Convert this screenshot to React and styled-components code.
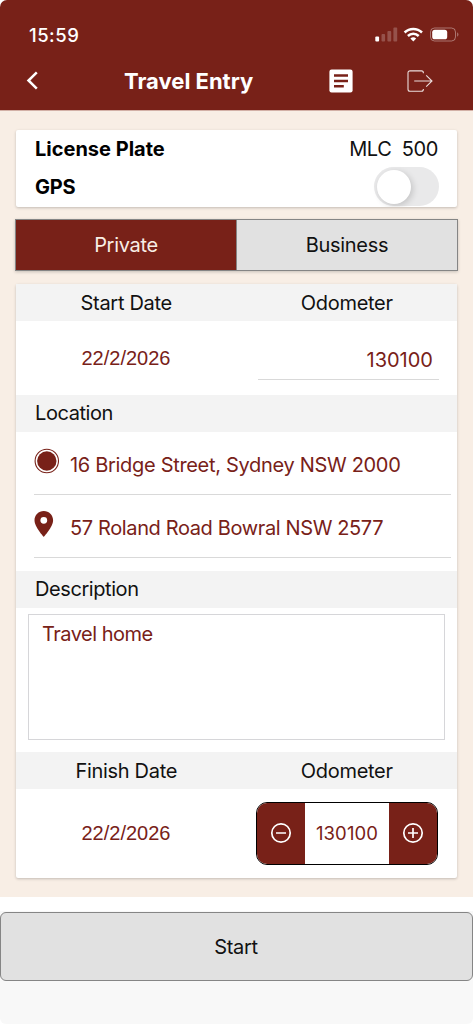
import * as React from "react"
import styled, { createGlobalStyle } from "styled-components"

const App = () => {
  return (
    <Screen>
      <GlobalStyle />
      <Header>
        <StatusBar>
          <Clock>15:59</Clock>
          <StatusIcons />
        </StatusBar>
        <NavBar>
          <BackIcon />
          <Title>Travel Entry</Title>
          <NotesIcon />
          <LogoutIcon />
        </NavBar>
      </Header>

      <Content>
        <PlateCard>
          <PlateRow>
            <Strong>License Plate</Strong>
            <Plate>MLC&nbsp; 500</Plate>
          </PlateRow>
          <PlateRow>
            <Strong $track="-0.2px">GPS</Strong>
            <Switch>
              <Knob />
            </Switch>
          </PlateRow>
        </PlateCard>

        <Segments>
          <Segment $active>Private</Segment>
          <Segment>Business</Segment>
        </Segments>

        <Panel>
          <SectionRow>
            <Cell>Start Date</Cell>
            <Cell>Odometer</Cell>
          </SectionRow>
          <StartRow>
            <DateValue>22/2/2026</DateValue>
            <OdometerField>130100</OdometerField>
          </StartRow>

          <SectionTitle>Location</SectionTitle>
          <Places>
            <Place>
              <OriginIcon />
              <Address>16 Bridge Street, Sydney NSW 2000</Address>
            </Place>
            <Place>
              <PinIcon />
              <Address $track="-0.37px">57 Roland Road Bowral NSW 2577</Address>
            </Place>
          </Places>

          <SectionTitle>Description</SectionTitle>
          <Note>Travel home</Note>

          <SectionRow>
            <Cell>Finish Date</Cell>
            <Cell>Odometer</Cell>
          </SectionRow>
          <FinishRow>
            <DateValue>22/2/2026</DateValue>
            <Stepper>
              <StepButton>
                <StepIcon />
              </StepButton>
              <StepValue>130100</StepValue>
              <StepButton>
                <StepIcon plus />
              </StepButton>
            </Stepper>
          </FinishRow>
        </Panel>
      </Content>

      <Footer>
        <StartButton>Start</StartButton>
      </Footer>
    </Screen>
  )
}

export default App

// icons

const StatusIcons = () => (
  <svg width="86" height="18" viewBox="0 0 86 18">
    <g fill="#fff">
      <rect x="1.3" y="11.5" width="3.8" height="5" rx="1" />
      <g opacity="0.22">
        <rect x="7.5" y="9" width="3.6" height="7.5" rx="0.9" />
        <rect x="13.4" y="6" width="3.8" height="10.5" rx="0.9" />
        <rect x="19.4" y="2.5" width="3.8" height="14" rx="0.9" />
      </g>
    </g>
    <g fill="none" stroke="#fff" strokeWidth="2.5">
      <path d="M30.6 7.5a12.6 12.6 0 0 1 17.4 0" />
      <path d="M33.9 11a7.8 7.8 0 0 1 10.8 0" />
    </g>
    <path d="M36.4 13.6a4.4 4.4 0 0 1 5.8 0L39.3 16.6z" fill="#fff" />
    <rect x="56.5" y="3" width="25" height="13" rx="4" fill="none" stroke="#fff" strokeOpacity="0.38" />
    <rect x="58.2" y="4.7" width="15" height="9.6" rx="2.6" fill="#fff" />
    <path d="M83.2 7.3c1.7.7 1.7 3.7 0 4.4z" fill="#fff" opacity="0.4" />
  </svg>
)

const BackIcon = () => (
  <svg width="20" height="24" viewBox="0 0 20 24">
    <path d="M13.8 3.4L5.5 11.5l8.3 8.1" fill="none" stroke="#fff" strokeWidth="2.5" />
  </svg>
)

const NotesIcon = () => (
  <svg width="24" height="24" viewBox="0 0 24 24">
    <rect x="0.4" y="0.5" width="23.2" height="23" rx="2.2" fill="#fff" />
    <path d="M5 6.5h14M5 12h14M5 17.2h9.8" stroke="#782118" strokeWidth="2.6" />
  </svg>
)

const LogoutIcon = () => (
  <svg width="28" height="24" viewBox="0 0 28 24">
    <g fill="none" stroke="#fff" strokeOpacity="0.85" strokeWidth="1.1">
      <path d="M17.4 4.2V3.9a2 2 0 0 0-2-2H4a2 2 0 0 0-2 2v16.4a2 2 0 0 0 2 2h11.4a2 2 0 0 0 2-2V20" />
      <path d="M8.2 12h17.6M20.2 6.3l5.8 5.7-5.8 5.7" />
    </g>
  </svg>
)

const OriginIcon = () => (
  <svg width="26" height="26" viewBox="0 0 26 26">
    <circle cx="12.8" cy="13" r="11.7" fill="none" stroke="#782118" strokeWidth="1.1" />
    <circle cx="12.8" cy="13" r="9.7" fill="#782118" />
  </svg>
)

const PinIcon = () => (
  <svg width="26" height="26" viewBox="0 0 26 26">
    <path
      d="M9.8 0C4.6 0 .5 4.1.5 9.3c0 6.8 9.3 16.6 9.3 16.6s9.3-9.8 9.3-16.6C19.1 4.1 15 0 9.8 0zm0 12.7a3.4 3.4 0 1 1 0-6.8 3.4 3.4 0 0 1 0 6.8z"
      fill="#782118"
    />
  </svg>
)

const StepIcon = ({ plus }) => (
  <svg width="22" height="22" viewBox="0 0 22 22">
    <g fill="none" stroke="#fff" strokeWidth="1.7">
      <circle cx="11" cy="11" r="9.2" />
      <path d={plus ? "M6 11h10M11 6v10" : "M6 11h10"} />
    </g>
  </svg>
)

const GlobalStyle = createGlobalStyle`
  * {
    box-sizing: border-box;
  }
  body {
    margin: 0;
    background: #fff;
    font-family: Inter, "Liberation Sans", sans-serif;
    font-size: 20px;
    line-height: 24px;
    letter-spacing: -0.3px;
    color: #111;
  }
`
const Screen = styled.div`
  width: 473px;
  height: 1024px;
  overflow: hidden;
  white-space: nowrap;
`
const Header = styled.header`
  height: 110px;
  background: #782118;
  border-radius: 7px 7px 0 0;
  color: #fff;
`
const StatusBar = styled.div`
  display: flex;
  align-items: flex-start;
  justify-content: space-between;
  height: 68px;
  padding: 25px 13px 0 29px;
`
const Clock = styled.div`
  padding-top: 1px;
  font-size: 18.5px;
  font-weight: 500;
  line-height: 18px;
  letter-spacing: 0.5px;
`
const NavBar = styled.div`
  display: grid;
  grid-template-columns: 101px 205px 77px 28px;
  align-items: center;
  height: 26px;
  padding-left: 23px;
`
const Title = styled.h1`
  margin: 0;
  font-size: 22px;
  font-weight: 700;
  line-height: 26px;
  letter-spacing: 0;
`
const Content = styled.main`
  height: 787px;
  padding: 19px 16px 0;
  background: #f8eee5;
  border-top: 1px solid #d2b0a6;
`
const cardShadow = "0 1px 3px rgba(0, 0, 0, 0.22)"

const PlateCard = styled.section`
  height: 77px;
  padding: 0 19px;
  background: #fff;
  border-radius: 2px;
  box-shadow: ${cardShadow};
  overflow: hidden;
`
const PlateRow = styled.div`
  display: flex;
  align-items: center;
  justify-content: space-between;
  height: 38px;
`
const Strong = styled.span`
  font-weight: 700;
  color: #000;
  letter-spacing: ${props => props.$track || "0"};
`
const Plate = styled.span`
  letter-spacing: -0.4px;
`
const Switch = styled.div`
  width: 65px;
  height: 39px;
  margin: -1px -1px 0 0;
  padding: 3px;
  background: #e9e9ea;
  border-radius: 20px;
`
const Knob = styled.div`
  width: 34px;
  height: 34px;
  background: #fff;
  border-radius: 50%;
  box-shadow: 2px 2px 6px rgba(0, 0, 0, 0.16);
`
const Segments = styled.div`
  display: flex;
  height: 52px;
  margin: 12px -1px 0;
  border: 1px solid #858585;
  box-shadow: 0 1px 3px rgba(0, 0, 0, 0.2);
`
const Segment = styled.div`
  display: flex;
  flex: 1;
  align-items: center;
  justify-content: center;
  background: ${props => (props.$active ? "#782118" : "#e1e1e1")};
  color: ${props => (props.$active ? "#f8eee5" : "#111")};
  & + & {
    border-left: 1px solid #858585;
  }
`
const Panel = styled.section`
  height: 594px;
  margin-top: 13px;
  background: #fff;
  border-radius: 2px;
  box-shadow: ${cardShadow};
`
const SectionRow = styled.div`
  display: grid;
  grid-template-columns: 1fr 1fr;
  align-items: center;
  height: 37px;
  background: #f3f3f3;
`
const Cell = styled.div`
  text-align: center;
`
const SectionTitle = styled.div`
  height: 37px;
  padding: 6px 19px;
  background: #f3f3f3;
  letter-spacing: -0.42px;
`
const StartRow = styled.div`
  display: grid;
  grid-template-columns: 221px 1fr;
  height: 74px;
  padding-top: 25px;
`
const DateValue = styled.div`
  padding-right: 1px;
  font-family: "Liberation Sans", Arial, sans-serif;
  letter-spacing: 0;
  text-align: center;
  color: #782118;
`
const OdometerField = styled.div`
  height: 34px;
  margin: 0 18px 0 21px;
  padding: 2px 6px 0 0;
  border-bottom: 1px solid #d9d9d9;
  text-align: right;
  letter-spacing: 0;
  color: #782118;
`
const Places = styled.div`
  height: 139px;
  padding: 0 6px 0 18px;
`
const Place = styled.div`
  display: flex;
  align-items: flex-start;
  gap: 10px;
  height: 63px;
  padding-top: 16px;
  border-bottom: 1px solid #d9d9d9;
  color: #782118;
`
const Address = styled.span`
  padding-top: 5px;
  letter-spacing: ${props => props.$track || "-0.31px"};
`
const Note = styled.div`
  height: 126px;
  margin: 6px 12px 12px 12px;
  padding: 7px 13px;
  border: 1px solid #d6d6d9;
  letter-spacing: -0.5px;
  color: #782118;
`
const FinishRow = styled.div`
  display: grid;
  grid-template-columns: 221px 1fr;
  align-items: center;
  height: 88px;
`
const Stepper = styled.div`
  display: grid;
  grid-template-columns: 48px 1fr 48px;
  width: 182px;
  height: 63px;
  margin-left: 19px;
  border: 1px solid #000;
  border-radius: 11px;
  overflow: hidden;
`
const StepButton = styled.div`
  display: flex;
  align-items: center;
  justify-content: center;
  background: #782118;
`
const StepValue = styled.div`
  align-self: center;
  font-size: 18.5px;
  letter-spacing: 0.1px;
  text-align: center;
  color: #782118;
`
const Footer = styled.footer`
  height: 127px;
  padding-top: 15px;
  background: linear-gradient(#fff 14px, #f8f8f8 14px);
  border-radius: 0 0 6px 6px;
`
const StartButton = styled.div`
  display: flex;
  align-items: center;
  justify-content: center;
  height: 69px;
  padding-right: 1px;
  background: #e1e1e1;
  border: 1px solid #858585;
  border-radius: 6px;
`
